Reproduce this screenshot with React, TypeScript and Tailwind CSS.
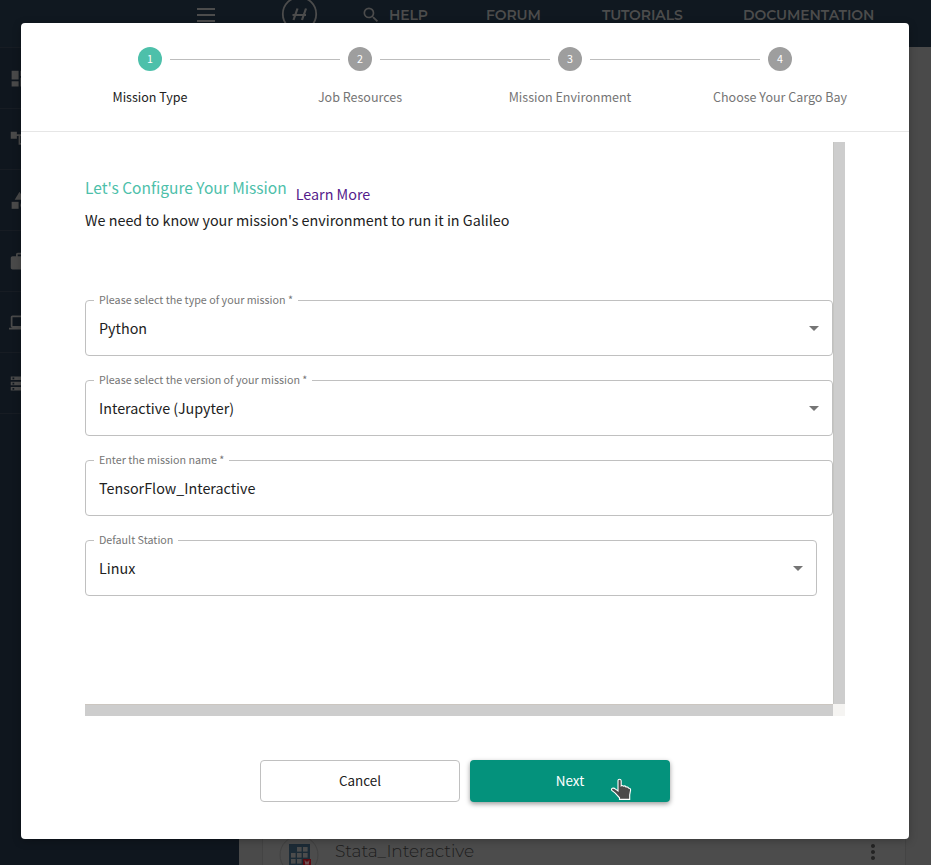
import React from "react";
import {
  MdAccountTree,
  MdArrowDropDown,
  MdCategory,
  MdDashboard,
  MdLaptop,
  MdMoreVert,
  MdSearch,
  MdStorage,
  MdWork,
} from "react-icons/md";

const steps = ["Mission Type", "Job Resources", "Mission Environment", "Choose Your Cargo Bay"];
const sideIcons = [MdDashboard, MdAccountTree, MdCategory, MdWork, MdLaptop, MdStorage];

function Header() {
  return (
    <header className="relative h-[47px] bg-[#101820] font-['Montserrat','Inter',sans-serif] text-[14px] leading-[18px] font-semibold text-[#4c4c4c]">
      <div className="flex h-[30px] items-center">
        <div className="ml-[197px] flex w-[18px] flex-col gap-1">
          <i className="h-[2px] bg-[#4c4c4c]" />
          <i className="h-[2px] bg-[#4c4c4c]" />
          <i className="h-[2px] bg-[#4c4c4c]" />
        </div>
        <svg className="ml-[66px] h-[38px] w-[38px]" viewBox="0 0 38 38" fill="none" stroke="#4c4c4c">
          <circle cx="18.5" cy="18" r="16.7" strokeWidth="1.8" />
          <path d="M16.5 12.5 12.5 24M25 12.5 21 24M11.5 19H25" strokeWidth="2.2" />
        </svg>
        <MdSearch className="ml-[42px] h-5 w-5 text-[#4c4c4c]" />
        <span className="ml-[8px] w-[97px] tracking-[-0.1px]">HELP</span>
        <span className="w-[116px] tracking-[-0.1px]">FORUM</span>
        <span className="w-[141px] tracking-[-0.1px]">TUTORIALS</span>
        <span className="tracking-[-0.1px]">DOCUMENTATION</span>
      </div>
    </header>
  );
}

function Sidebar() {
  return (
    <nav className="w-[239px] bg-[#0f161e]">
      {sideIcons.map((Icon, i) => (
        <div key={i} className="flex h-[61px] items-center border-t border-[#171c23] pl-[9px]">
          <Icon className="h-[21px] w-[21px] text-[#4a4a4a]" />
        </div>
      ))}
      <div className="border-t border-[#171c23]" />
    </nav>
  );
}

function MissionRow() {
  return (
    <div className="mr-[25px] ml-[23px] flex h-[30px] items-start border-x border-[#444] bg-[#4c4c4c]">
      <svg className="ml-[16px] h-[38px] w-[40px] shrink-0" viewBox="0 0 40 38">
        <circle cx="20" cy="20" r="19" fill="none" stroke="#414141" />
        <rect x="10" y="9" width="21" height="21" fill="#1c2b36" />
        {[[18, 12], [24, 12], [18, 18], [24, 18], [12, 18], [12, 24], [18, 24]].map(([x, y]) => (
          <rect key={`${x}-${y}`} x={x} y={y} width="4.6" height="4.6" fill="#4c4c4c" />
        ))}
        <rect x="24" y="24" width="8" height="8" fill="#5c0a10" />
        <path d="m26 25.5 1 4 1-3 1 3 1-4" stroke="#777" fill="none" strokeWidth=".7" />
      </svg>
      <span className="ml-[16px] pt-[4px] font-['Montserrat','Inter',sans-serif] text-[17px] leading-6 font-light tracking-[-0.1px] text-[#1c1c1c]">
        Stata_Interactive
      </span>
      <MdMoreVert className="mt-[5px] mr-[20px] ml-auto h-6 w-6 text-[#232323]" />
    </div>
  );
}

function Stepper() {
  return (
    <div className="flex h-[109px] border-b border-[#e6e6e6] px-[24px] pt-[24px]">
      {steps.map((label, i) => (
        <div key={label} className="flex w-[210px] flex-col items-center">
          <div className="flex w-full items-center">
            <i className={`h-px flex-1 ${i === 0 ? "" : "bg-[#bdbdbd]"}`} />
            <span
              className={`mx-[8px] flex h-6 w-6 items-center justify-center rounded-full text-[10.7px] leading-6 text-white ${i === 0 ? "bg-[#4dc0aa]" : "bg-[#9e9e9e]"}`}
            >
              {i + 1}
            </span>
            <i className={`h-px flex-1 ${i === 3 ? "" : "bg-[#bdbdbd]"}`} />
          </div>
          <span className={`mt-[16px] text-[12.53px] leading-5 whitespace-nowrap ${i === 0 ? "text-[#212121]" : "text-[#757575]"}`}>
            {label}
          </span>
        </div>
      ))}
    </div>
  );
}

type FieldProps = { label: string; value: string; select?: boolean; short?: boolean };

function Field({ label, value, select, short }: FieldProps) {
  return (
    <fieldset
      className={`mb-[19px] h-[61px] rounded-[4px] border border-[#c0c0c0] pr-[6px] pl-[8px] ${short ? "w-[732px]" : "w-[748px]"}`}
    >
      <legend className="h-[11px] px-[5px] text-[10.72px] leading-[9px] text-[#757575]">{label}</legend>
      <div className="flex h-[43px] items-center justify-between pl-[5px]">
        <span className="text-[14.33px] leading-6 text-[#212121]">{value}</span>
        {select && <MdArrowDropDown className="h-6 w-6 text-[#757575]" />}
      </div>
    </fieldset>
  );
}

function HandCursor() {
  return (
    <svg className="absolute top-[17px] left-[140px] h-[25px] w-[22px]" viewBox="0 0 22 25">
      <path
        d="M8 3.6Q8 2.3 9.5 2.3T11.2 3.8V8.8Q12.2 8 13.4 9.2Q15 8.4 16 10Q17.8 9.4 18.8 11.2Q20.6 11 20.6 13L19.7 18V22.4H9.5V20.8L5 15.8 1.8 13.4Q1 12 2.4 11.3 4 10.7 5.5 12.2L8 14Z"
        fill="#4a4a4a"
        stroke="#fff"
        strokeWidth="1.1"
      />
    </svg>
  );
}

function Dialog() {
  return (
    <main className="absolute top-[23px] left-[21px] h-[816px] w-[888px] rounded-[4px] bg-white font-['Noto_Sans_CJK_SC',sans-serif] shadow-[0_2px_8px_rgba(0,0,0,0.25)]">
      <Stepper />
      <div className="mt-[10px] ml-[64px] grid h-[574px] w-[760px] grid-cols-[748px_12px] grid-rows-[562px_12px]">
        <section className="pt-[31px] whitespace-nowrap">
          <div className="flex h-[34px] items-start">
            <h1 className="text-[15.53px] leading-7 text-[#4dc0aa]">Let's Configure Your Mission</h1>
            <a className="mt-[9px] ml-[9px] text-[14.33px] leading-6 text-[#551a8b]">Learn More</a>
          </div>
          <p className="mt-[1px] text-[14.33px] leading-6 text-[#212121]">
            We need to know your mission's environment to run it in Galileo
          </p>
          <div className="mt-[63px]">
            <Field label="Please select the type of your mission *" value="Python" select />
            <Field label="Please select the version of your mission *" value="Interactive (Jupyter)" select />
            <Field label="Enter the mission name *" value="TensorFlow_Interactive" />
            <Field label="Default Station" value="Linux" select short />
          </div>
        </section>
        <div className="border-l border-[#c5c5c2] bg-[#cdcdcd]" />
        <div className="border-t border-[#cbc6c0] bg-[#cdcdcd]" />
        <div className="bg-[#f5f4f2]" />
      </div>
      <div className="mt-[44px] flex justify-center gap-[10px] text-[13.45px] leading-5">
        <button className="h-[42px] w-[200px] rounded-[4px] border border-[#c0c0c0] pb-[2px] text-[#212121]">Cancel</button>
        <button className="relative h-[42px] w-[200px] rounded-[4px] bg-[#04927c] pb-[2px] text-white shadow-[0_2px_5px_rgba(0,0,0,0.4)]">
          Next
          <HandCursor />
        </button>
      </div>
    </main>
  );
}

export default function App() {
  return (
    <div className="relative flex h-[865px] w-[931px] flex-col overflow-hidden bg-[#4a4a4a]">
      <Header />
      <div className="flex min-h-0 flex-1">
        <Sidebar />
        <div className="flex flex-1 flex-col justify-end">
          <MissionRow />
        </div>
      </div>
      <Dialog />
    </div>
  );
}
